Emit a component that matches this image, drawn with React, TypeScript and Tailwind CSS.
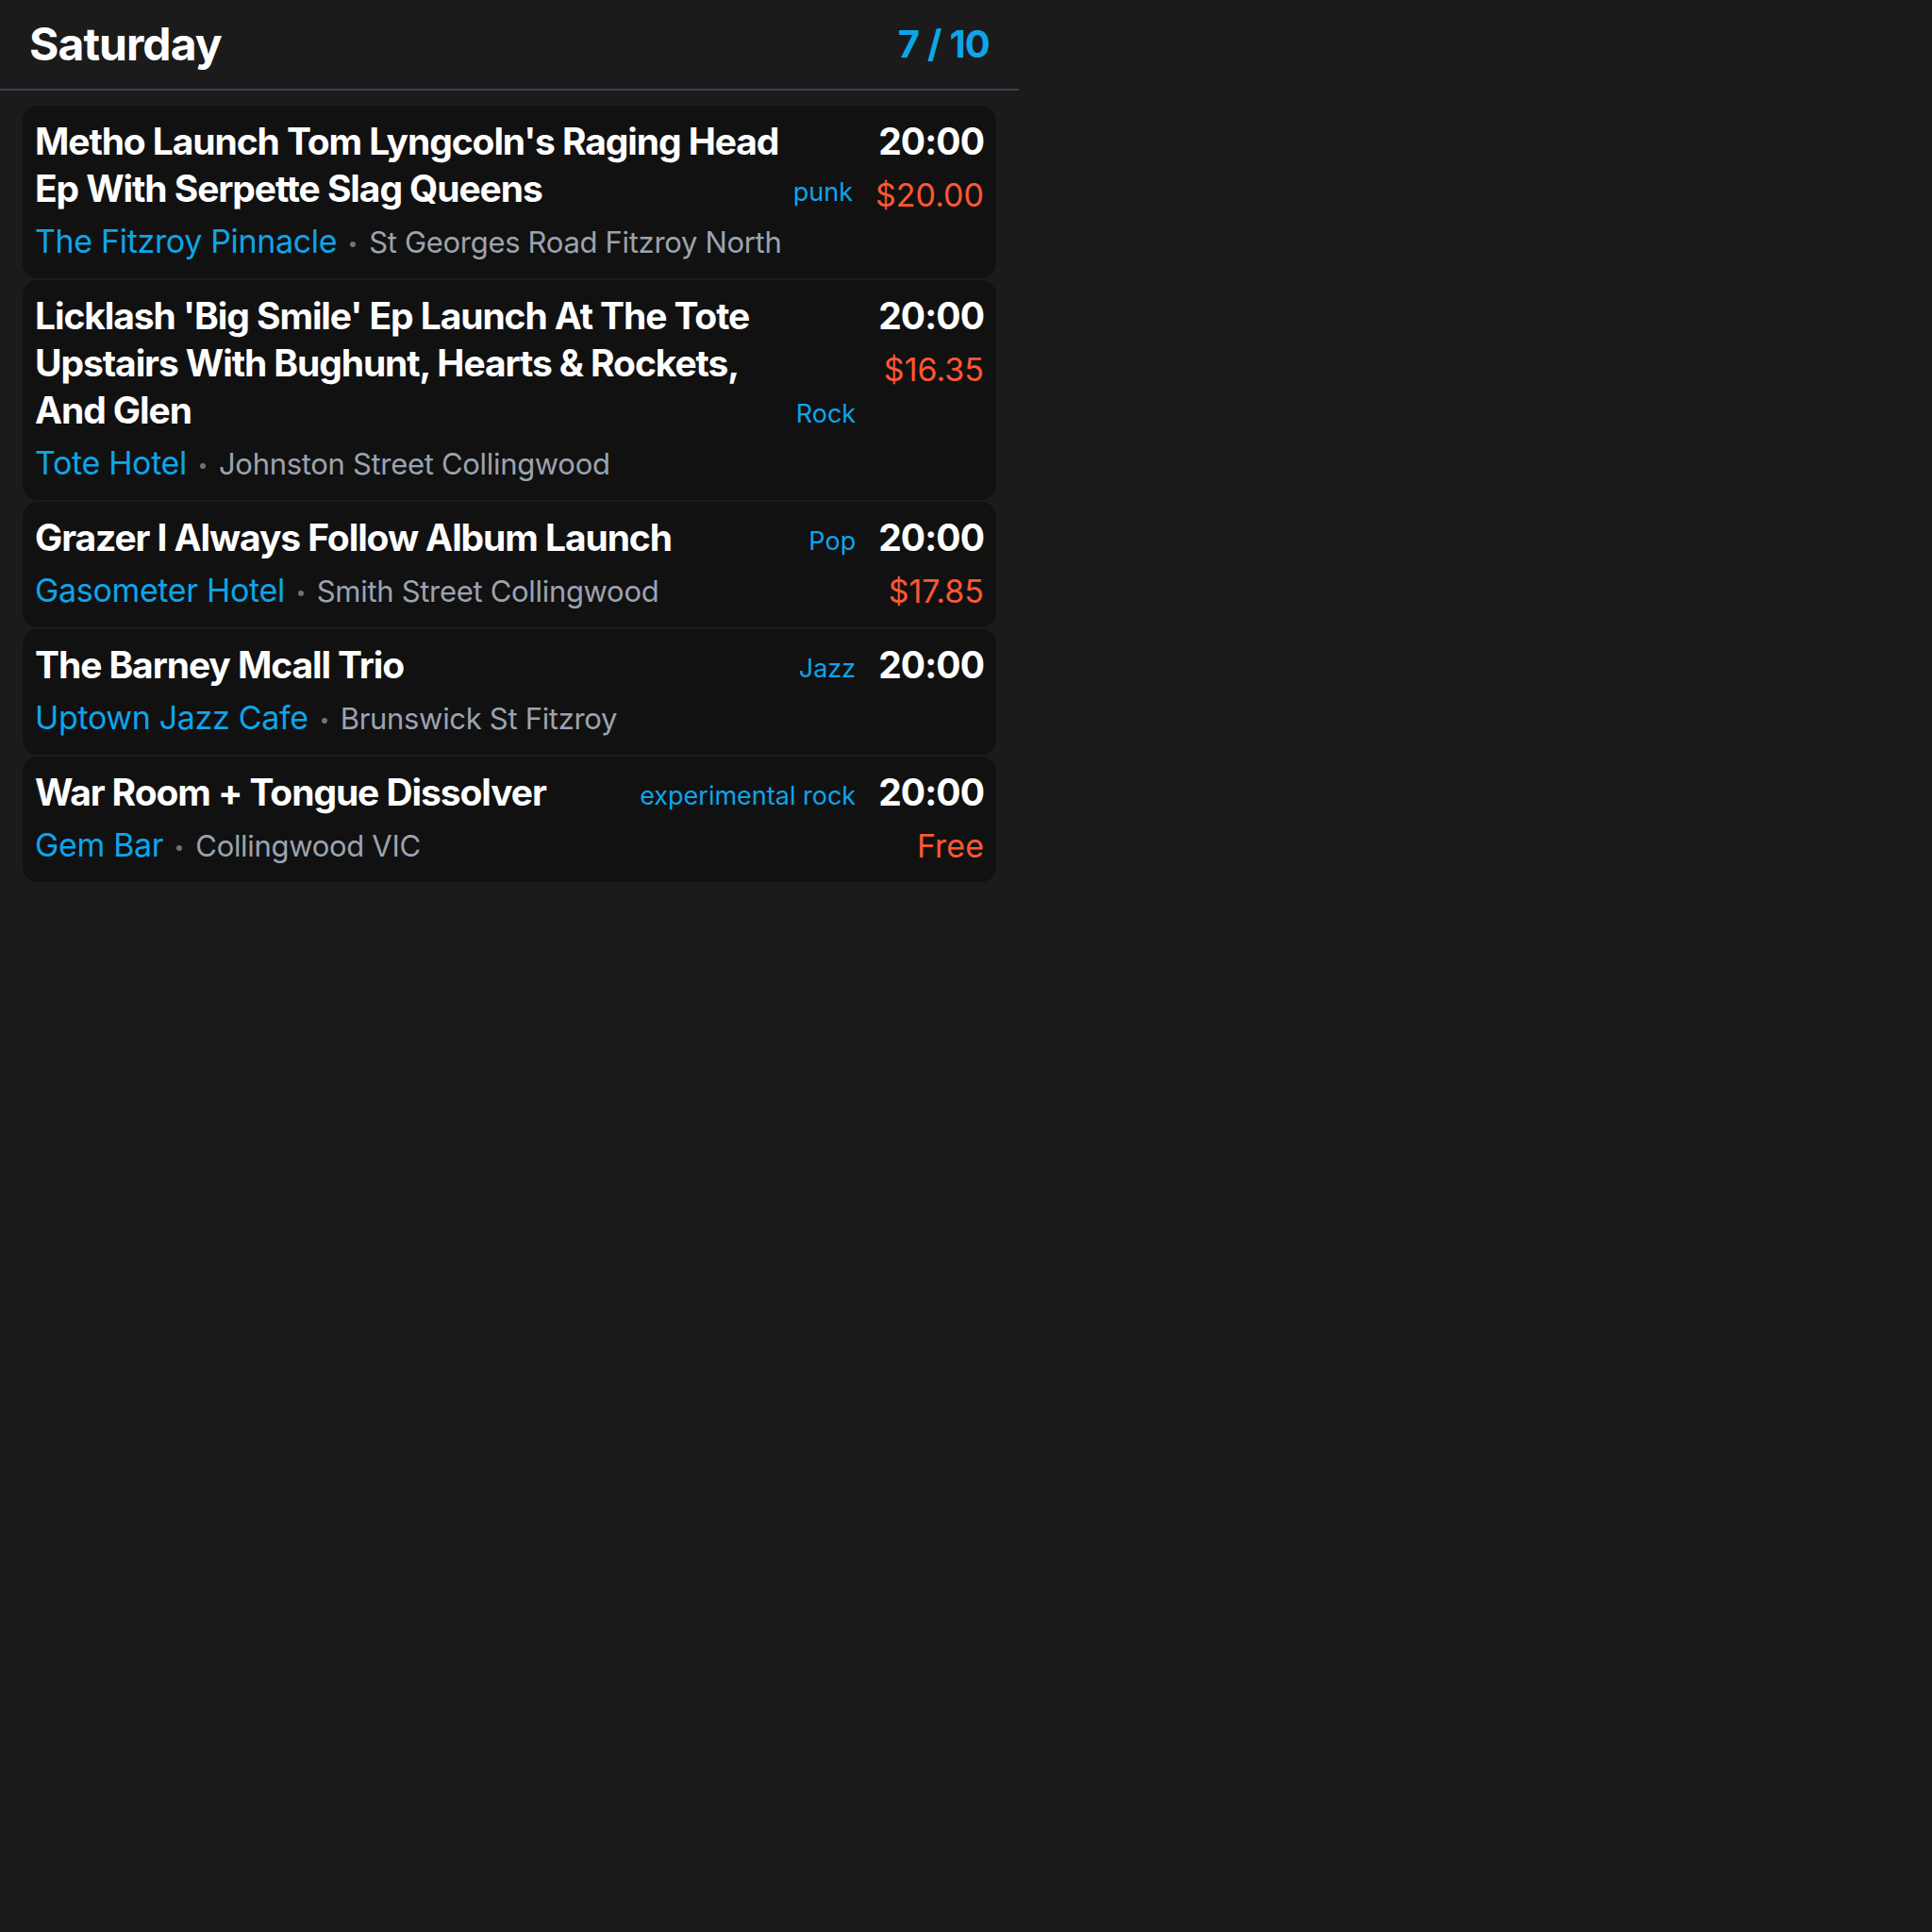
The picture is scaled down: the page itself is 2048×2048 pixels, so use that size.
import React from 'react';

type Gig = {
  title: string;
  genre: string;
  venue: string;
  address: string;
  time: string;
  price?: string;
};

const GIGS: Gig[] = [
  {
    title: "Metho Launch Tom Lyngcoln's Raging Head Ep With Serpette Slag Queens",
    genre: 'punk',
    venue: 'The Fitzroy Pinnacle',
    address: 'St Georges Road Fitzroy North',
    time: '20:00',
    price: '$20.00',
  },
  {
    title: "Licklash 'Big Smile' Ep Launch At The Tote Upstairs With Bughunt, Hearts & Rockets, And Glen",
    genre: 'Rock',
    venue: 'Tote Hotel',
    address: 'Johnston Street Collingwood',
    time: '20:00',
    price: '$16.35',
  },
  {
    title: 'Grazer I Always Follow Album Launch',
    genre: 'Pop',
    venue: 'Gasometer Hotel',
    address: 'Smith Street Collingwood',
    time: '20:00',
    price: '$17.85',
  },
  {
    title: 'The Barney Mcall Trio',
    genre: 'Jazz',
    venue: 'Uptown Jazz Cafe',
    address: 'Brunswick St Fitzroy',
    time: '20:00',
  },
  {
    title: 'War Room + Tongue Dissolver',
    genre: 'experimental rock',
    venue: 'Gem Bar',
    address: 'Collingwood VIC',
    time: '20:00',
    price: 'Free',
  },
];

function GigCard({ gig }: { gig: Gig }) {
  return (
    <div className="flex rounded-[16px] bg-[#111111] px-[13px] pt-[13px] pb-[12px]">
      {/* Left: title + venue */}
      <div className="flex flex-1 flex-col gap-[4px]">
        <div className="flex items-end gap-[6px]">
          <h2 className="flex-1 text-[39px] font-bold leading-[50px] tracking-[-0.028em] text-white">
            {gig.title}
          </h2>
          <span className="pb-[1px] text-[27px] leading-[40px] text-[#0ea5e9]">{gig.genre}</span>
        </div>
        <div className="flex h-[54px] items-baseline whitespace-nowrap">
          <span className="text-[34px] leading-[54px] tracking-[-0.01em] text-[#0ea5e9]">{gig.venue}</span>
          <span className="mx-[14px] inline-block h-[6px] w-[6px] -translate-y-[6px] rounded-full bg-[#6b7280]" />
          <span className="text-[31px] leading-none tracking-[-0.01em] text-[#9ca3af]">{gig.address}</span>
        </div>
      </div>

      {/* Right: time + price */}
      <div className="ml-[24px] flex flex-col items-end">
        <span className="text-[39px] font-bold leading-[50px] tracking-[-0.024em] text-white">
          {gig.time}
        </span>
        {gig.price && (
          <span className="mt-[8px] text-[34px] leading-[48px] text-[#ff5733]">{gig.price}</span>
        )}
      </div>
    </div>
  );
}

export default function App() {
  return (
    <div className="min-h-screen bg-[#1b1b1b] font-['Inter','Noto_Sans',sans-serif]">
      <div className="w-[1080px]">
        {/* Day header */}
        <header className="flex h-[96px] items-center justify-between border-b-2 border-[#3a4252] px-[31px]">
          <h1 className="text-[48px] font-bold tracking-[-0.02em] text-white">Saturday</h1>
          <span className="text-[40px] font-bold tracking-[-0.02em] text-[#0ea5e9]">7 / 10</span>
        </header>

        {/* Gig list */}
        <div className="flex flex-col gap-[2px] px-[24px] pt-[16px]">
          {GIGS.map((gig) => (
            <GigCard key={gig.title} gig={gig} />
          ))}
        </div>
      </div>
    </div>
  );
}
